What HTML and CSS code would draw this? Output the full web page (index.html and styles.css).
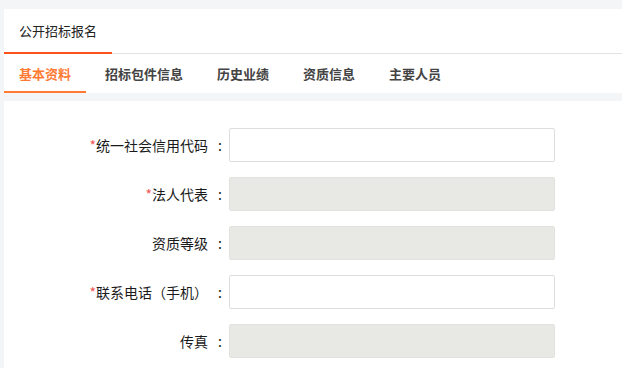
FILE: index.html
```html
<!DOCTYPE html>
<html lang="zh-CN">
<head>
	<meta charset="UTF-8">
	<title>公开招标报名</title>
	<link rel="stylesheet" href="styles.css">
</head>
<body>
	<div class="page">
		<div class="header">
			<span class="header-title">公开招标报名</span>
		</div>
		<ul class="tabs">
			<li class="current">基本资料</li>
			<li>招标包件信息</li>
			<li>历史业绩</li>
			<li>资质信息</li>
			<li>主要人员</li>
		</ul>
		<form class="form">
			<div class="row">
				<label class="label"><em>*</em>统一社会信用代码<span class="colon">:</span></label>
				<input class="ipt" type="text">
			</div>
			<div class="row">
				<label class="label"><em>*</em>法人代表<span class="colon">:</span></label>
				<input class="ipt" type="text" disabled>
			</div>
			<div class="row">
				<label class="label">资质等级<span class="colon">:</span></label>
				<input class="ipt" type="text" disabled>
			</div>
			<div class="row">
				<label class="label"><em>*</em>联系电话（手机）<span class="colon">:</span></label>
				<input class="ipt" type="text">
			</div>
			<div class="row">
				<label class="label">传真<span class="colon">:</span></label>
				<input class="ipt" type="text" disabled>
			</div>
		</form>
	</div>
</body>
</html>
```
FILE: styles.css
```css
ul,li,p{list-style: none;margin:0;padding:0;}
html,body{margin:0;padding:0;background-color:#f4f5f7;}
body{font-family:"Noto Sans CJK SC","Microsoft YaHei",sans-serif;font-size:13px;color:#333;}
.page{padding:9px 0 0 4px;}

/* 顶部标题 */
.header{display:flex;height:44px;background-color:#fff;border-bottom:1px solid #e3e3e3;}
.header-title{display:block;width:108px;box-sizing:border-box;padding:13px 0 0 15px;height:45px;margin-bottom:-1px;border-bottom:2px solid #ff5219;color:#222;line-height:18px;}

/* 选项卡 */
.tabs{display:flex;gap:4px;height:39px;background-color:#fff;}
.tabs li{box-sizing:border-box;height:39px;padding:11px 15px 0;font-weight:bold;line-height:18px;color:#444;}
.tabs li.current{color:#ff7a33;border-bottom:2px solid #ff7a33;}

/* 表单 */
.form{margin-top:8px;background-color:#fff;padding:27px 0 20px;}
.row{display:flex;align-items:center;margin-bottom:15px;}
.label{width:225px;box-sizing:border-box;padding-right:7px;text-align:right;color:#1a1a1a;font-size:14px;}
.label em{font-style:normal;color:#f25555;}
.colon{display:inline-block;margin-left:10px;}
.ipt{width:326px;height:34px;box-sizing:border-box;border:1px solid #dedede;border-radius:2px;background-color:#fff;margin:0;padding:0 8px;font-size:13px;}
.ipt:disabled{background-color:#e8e8e4;border-color:#e2e2de;}
```
